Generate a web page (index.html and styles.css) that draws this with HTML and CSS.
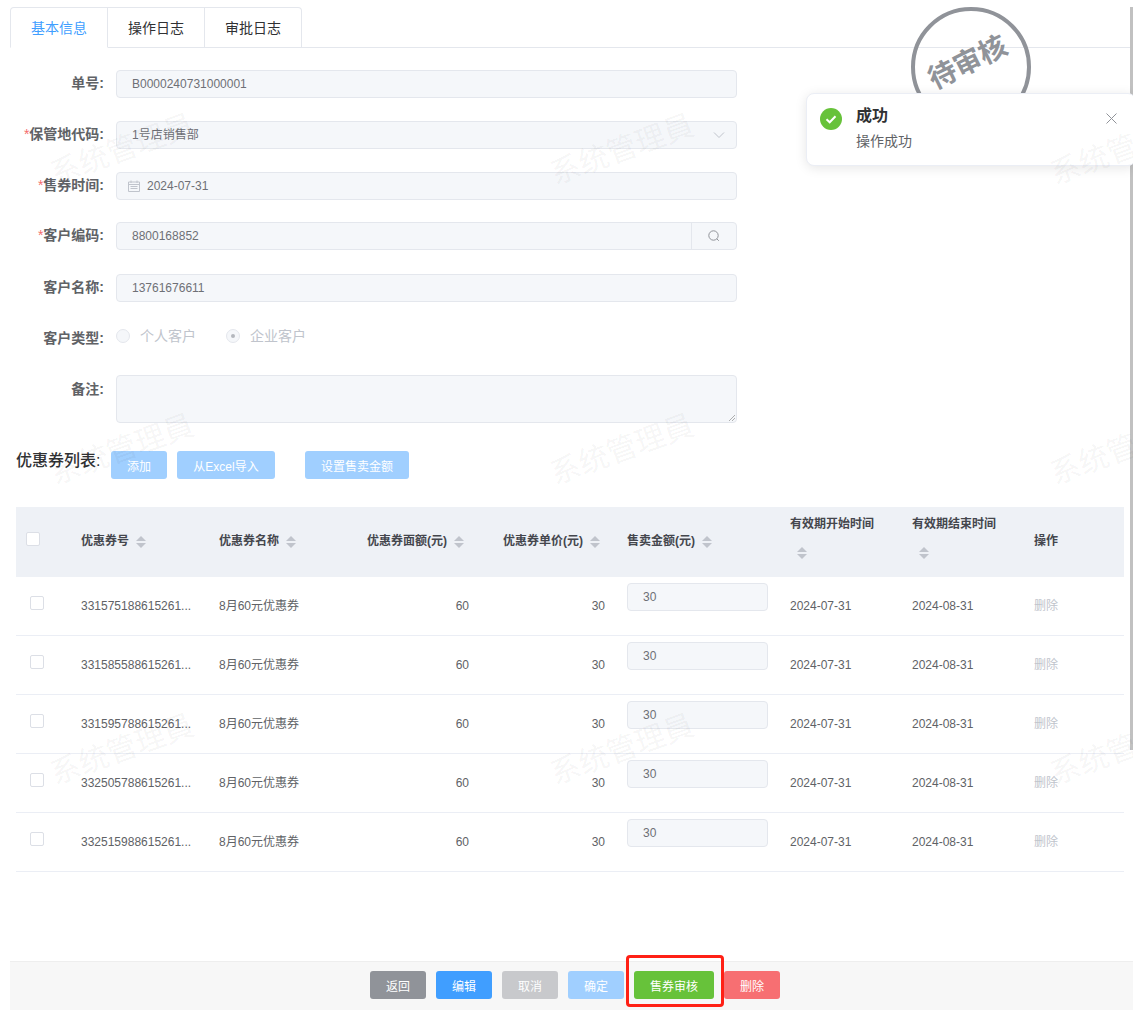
FILE: index.html
```html
<!DOCTYPE html>
<html lang="zh-CN">
<head>
<meta charset="utf-8">
<title>售券单</title>
<link rel="stylesheet" href="styles.css">
</head>
<body>
<div class="page">
  <main class="main">
    <div class="tabs">
      <div class="tab tab-active">基本信息</div>
      <div class="tab">操作日志</div>
      <div class="tab">审批日志</div>
    </div>
    <form class="form">
      <div class="row">
        <div class="label">单号:</div>
        <div class="input">B0000240731000001</div>
      </div>
      <div class="row">
        <div class="label"><span class="req">*</span>保管地代码:</div>
        <div class="input input-select">1号店销售部
          <svg class="arrow" width="12" height="8" viewBox="0 0 12 8"><path d="M1 1.500l5 5 5-5" fill="none" stroke="#c0c4cc" stroke-width="1"/></svg>
        </div>
      </div>
      <div class="row">
        <div class="label"><span class="req">*</span>售券时间:</div>
        <div class="input input-date">
          <svg width="12" height="12" viewBox="0 0 12 12"><path d="M.5 2h11v9.500H.5zM.5 4.500h11M3 .5v2.500M9 .5v2.500M2.500 6.500h7M2.500 8.500h7" fill="none" stroke="#c0c4cc" stroke-width="1"/></svg>
          2024-07-31
        </div>
      </div>
      <div class="row">
        <div class="label"><span class="req">*</span>客户编码:</div>
        <div class="input input-group">
          <span class="group-text">8800168852</span>
          <span class="append"><svg width="12" height="12" viewBox="0 0 12 12"><circle cx="5.500" cy="5.500" r="4.700" fill="none" stroke="#909399" stroke-width="1"/><path d="M8.800 8.800l2 2" stroke="#909399" stroke-width="1"/></svg></span>
        </div>
      </div>
      <div class="row">
        <div class="label">客户名称:</div>
        <div class="input">13761676611</div>
      </div>
      <div class="row row-radio">
        <div class="label label-radio">客户类型:</div>
        <div class="radios">
          <span class="radio"><i class="dot"></i>个人客户</span>
          <span class="radio"><i class="dot dot-on"></i>企业客户</span>
        </div>
      </div>
      <div class="row">
        <div class="label label-area">备注:</div>
        <div class="input textarea">
          <svg class="grip" width="6" height="6" viewBox="0 0 6 6"><path d="M0 6l6-6M3 6l3-3" stroke="#9a9a9a" stroke-width=".8"/></svg>
        </div>
      </div>
    </form>

    <div class="list-head">
      <div class="list-title">优惠券列表:</div>
      <button type="button" class="btn btn-light">添加</button>
      <button type="button" class="btn btn-light btn-excel">从Excel导入</button>
      <button type="button" class="btn btn-light btn-far">设置售卖金额</button>
    </div>

    <table class="table">
      <colgroup>
        <col class="c1"><col class="c2"><col class="c3"><col class="c4"><col class="c5"><col class="c6"><col class="c7"><col class="c8"><col class="c9">
      </colgroup>
      <thead>
        <tr>
          <th class="th-check"><span class="check"></span></th>
          <th>优惠券号<span class="sort"></span></th>
          <th>优惠券名称<span class="sort"></span></th>
          <th class="th-right">优惠券面额(元)<span class="sort"></span></th>
          <th class="th-right">优惠券单价(元)<span class="sort"></span></th>
          <th class="th-amount">售卖金额(元)<span class="sort"></span></th>
          <th>有效期开始时间<span class="sort"></span></th>
          <th>有效期结束时间<span class="sort"></span></th>
          <th>操作</th>
        </tr>
      </thead>
      <tbody>
        <tr>
          <td class="td-check"><span class="check"></span></td>
          <td>331575188615261...</td><td>8月60元优惠券</td><td class="right">60</td><td class="right">30</td>
          <td class="td-amount"><div class="input input-cell">30</div></td>
          <td>2024-07-31</td><td>2024-08-31</td><td class="op">删除</td>
        </tr>
        <tr>
          <td class="td-check"><span class="check"></span></td>
          <td>331585588615261...</td><td>8月60元优惠券</td><td class="right">60</td><td class="right">30</td>
          <td class="td-amount"><div class="input input-cell">30</div></td>
          <td>2024-07-31</td><td>2024-08-31</td><td class="op">删除</td>
        </tr>
        <tr>
          <td class="td-check"><span class="check"></span></td>
          <td>331595788615261...</td><td>8月60元优惠券</td><td class="right">60</td><td class="right">30</td>
          <td class="td-amount"><div class="input input-cell">30</div></td>
          <td>2024-07-31</td><td>2024-08-31</td><td class="op">删除</td>
        </tr>
        <tr>
          <td class="td-check"><span class="check"></span></td>
          <td>332505788615261...</td><td>8月60元优惠券</td><td class="right">60</td><td class="right">30</td>
          <td class="td-amount"><div class="input input-cell">30</div></td>
          <td>2024-07-31</td><td>2024-08-31</td><td class="op">删除</td>
        </tr>
        <tr>
          <td class="td-check"><span class="check"></span></td>
          <td>332515988615261...</td><td>8月60元优惠券</td><td class="right">60</td><td class="right">30</td>
          <td class="td-amount"><div class="input input-cell">30</div></td>
          <td>2024-07-31</td><td>2024-08-31</td><td class="op">删除</td>
        </tr>
      </tbody>
    </table>
  </main>

  <footer class="footer">
    <button type="button" class="btn btn-grey">返回</button>
    <button type="button" class="btn btn-blue">编辑</button>
    <button type="button" class="btn btn-muted">取消</button>
    <button type="button" class="btn btn-light">确定</button>
    <button type="button" class="btn btn-green">售券审核</button>
    <button type="button" class="btn btn-red">删除</button>
  </footer>

  <div class="scrollbar"></div>
  <div class="stamp"><span class="stamp-text">待审核</span></div>

  <div class="notice">
    <svg class="notice-icon" width="22" height="22" viewBox="0 0 22 22"><circle cx="11" cy="11" r="11" fill="#67c23a"/><path d="M6.500 11.300l3.200 3 5.800-6" fill="none" stroke="#fff" stroke-width="2"/></svg>
    <div class="notice-body">
      <div class="notice-title">成功</div>
      <div class="notice-text">操作成功</div>
    </div>
    <svg class="notice-close" width="11" height="11" viewBox="0 0 11 11"><path d="M.5.500l10 10M10.500.500l-10 10" stroke="#909399" stroke-width="1"/></svg>
  </div>

  <div class="marks">
    <span>系统管理員</span><span>系统管理員</span><span>系统管理員</span>
    <span>系统管理員</span><span>系统管理員</span><span>系统管理員</span>
    <span>系统管理員</span><span>系统管理員</span><span>系统管理員</span>
  </div>

  <div class="highlight"></div>
</div>
</body>
</html>
```
FILE: styles.css
```css
* { box-sizing: border-box; }
html, body { margin: 0; height: 100%; overflow: hidden; background: #fff; }
body {
  font-family: "Liberation Sans", "Noto Sans CJK SC", sans-serif;
  font-size: 12px;
  color: #606266;
}
.page {
  position: relative;
  width: 1133px;
  height: 1010px;
  overflow: hidden;
  display: flex;
  flex-direction: column;
}
.main { flex: 1; padding: 7px 0 0 10px; min-height: 0; }

/* tabs */
.tabs { display: flex; height: 41px; width: 1120px; border-bottom: 1px solid #e4e7ed; }
.tab {
  width: 97px;
  height: 41px;
  line-height: 41px;
  text-align: center;
  font-size: 14px;
  color: #303133;
  border: 1px solid #e4e7ed;
  border-left: 0;
}
.tab:last-child { border-radius: 0 4px 0 0; }
.tab-active {
  width: 98px;
  color: #409eff;
  border-left: 1px solid #e4e7ed;
  border-bottom-color: #fff;
  border-radius: 4px 0 0 0;
}

/* form */
.form {
  display: grid;
  grid-template-rows: 51px 51px 50px 52px 48px 53px 48px;
  padding-top: 22px;
}
.row { display: flex; align-items: flex-start; column-gap: 12px; }
.label {
  width: 94px;
  height: 28px;
  line-height: 26px;
  text-align: right;
  font-size: 14px;
  font-weight: 700;
  white-space: nowrap;
  color: #606266;
}
.req { color: #f56c6c; font-weight: 400; }
.label-radio { line-height: 32px; }
.label-area { height: 28px; line-height: 28px; }
.input {
  position: relative;
  width: 621px;
  height: 28px;
  line-height: 26px;
  padding-left: 15px;
  background: #f5f7fa;
  border: 1px solid #e4e7ed;
  border-radius: 4px;
  color: #6e7076;
}
.input-select { display: block; }
.arrow { position: absolute; right: 11px; top: 9px; }
.input-date { display: flex; align-items: center; padding-left: 11px; column-gap: 7px; }
.input-group { display: flex; padding-right: 0; }
.group-text { flex: 1; }
.append {
  width: 45px;
  display: flex;
  align-items: center;
  justify-content: center;
  border-left: 1px solid #e4e7ed;
}
.radios { display: flex; column-gap: 30px; height: 28px; align-items: center; }
.radio { display: flex; align-items: center; column-gap: 10px; font-size: 14px; line-height: 18px; color: #c0c4cc; }
.dot {
  display: flex;
  align-items: center;
  justify-content: center;
  width: 14px;
  height: 14px;
  background: #f5f7fa;
  border: 1px solid #e4e7ed;
  border-radius: 50%;
}
.dot-on::after {
  content: "";
  width: 4px;
  height: 4px;
  border-radius: 50%;
  background: #b4b7bd;
}
.textarea { height: 48px; }
.grip { position: absolute; right: 1px; bottom: 1px; }

/* list toolbar */
.list-head { display: flex; margin: 28px 0 0 6px; height: 28px; }
.list-title {
  width: 95px;
  font-size: 16px;
  font-weight: 500;
  line-height: 20px;
  color: #303133;
  white-space: nowrap;
}
.btn {
  height: 28px;
  padding: 0 16px;
  border: 0;
  border-radius: 3px;
  font-family: inherit;
  font-size: 12px;
  color: #fff;
  white-space: nowrap;
}
.list-head .btn + .btn { margin-left: 10px; }
.list-head .btn + .btn-far { margin-left: 30px; }
.btn-excel { width: 98px; padding: 0; }
.btn-light { background: #a0cfff; }
.btn-grey { background: #909399; }
.btn-blue { background: #409eff; }
.btn-muted { background: #c8c9cc; }
.btn-green { background: #67c23a; }
.btn-red { background: #f76f72; }

/* table */
.table {
  margin: 28px 0 0 6px;
  width: 1108px;
  table-layout: fixed;
  border-collapse: separate;
  border-spacing: 0;
}
.c1 { width: 55px; }
.c2 { width: 138px; }
.c3 { width: 134px; }
.c4 { width: 136px; }
.c5 { width: 136px; }
.c6 { width: 165px; }
.c7 { width: 122px; }
.c8 { width: 122px; }
.c9 { width: 100px; }
.table th {
  height: 70px;
  padding: 0 10px 1px;
  background: #eef1f6;
  text-align: left;
  font-size: 12px;
  line-height: 23px;
  font-weight: 700;
  color: #44464d;
}
.table td {
  height: 59px;
  padding: 0 10px;
  line-height: 16px;
  border-bottom: 1px solid #ebeef5;
  white-space: nowrap;
  color: #606266;
}
.table .th-right { text-align: right; padding-right: 8px; }
.table .right { text-align: right; }
.table .th-amount { padding-left: 12px; }
.table .td-amount { padding: 0 12px; }
.table .th-check { padding: 0 0 6px 10px; }
.table .td-check { padding: 0 0 6px 14px; }
.check {
  display: block;
  width: 14px;
  height: 14px;
  background: #fff;
  border: 1px solid #dcdfe6;
  border-radius: 2px;
}
.sort {
  display: inline-flex;
  flex-direction: column;
  align-items: center;
  justify-content: center;
  row-gap: 2px;
  width: 24px;
  height: 34px;
  vertical-align: middle;
}
.sort::before, .sort::after {
  content: "";
  width: 0;
  height: 0;
  border-left: 5px solid transparent;
  border-right: 5px solid transparent;
}
.sort::before { border-bottom: 5px solid #c0c4cc; }
.sort::after { border-top: 5px solid #c0c4cc; }
.input-cell { width: 141px; margin-bottom: 18px; }
.table .op { color: #c0c4cc; }

/* footer */
.footer {
  flex: none;
  height: 49px;
  margin-left: 10px;
  padding: 0 0 2px 7px;
  display: flex;
  justify-content: center;
  align-items: center;
  column-gap: 10px;
  background: #f7f7f7;
  border-top: 1px solid #eeeeee;
}

/* overlays */
.scrollbar {
  position: absolute;
  right: 0;
  top: 7px;
  width: 3px;
  height: 743px;
  background: #c1c1c1;
}
.stamp {
  position: absolute;
  left: 911px;
  top: 7px;
  width: 120px;
  height: 120px;
  border: 4px solid #909399;
  border-radius: 50%;
  display: flex;
  align-items: center;
  justify-content: center;
}
.stamp-text {
  transform: rotate(-26.5deg);
  font-size: 28px;
  line-height: 34px;
  font-weight: 700;
  color: #909399;
  margin: 0 6px 9px 0;
}
.notice {
  position: absolute;
  left: 806px;
  top: 93px;
  width: 330px;
  height: 73px;
  display: flex;
  background: #fff;
  border: 1px solid #ebeef5;
  border-radius: 8px;
  box-shadow: 0 2px 12px rgba(0, 0, 0, .1);
  padding: 14px 0 0 13px;
}
.notice-icon { flex: none; }
.notice-body { margin-left: 14px; }
.notice-title { font-size: 16px; font-weight: 700; line-height: 16px; color: #303133; }
.notice-text { margin-top: 7px; font-size: 14px; line-height: 20px; color: #606266; }
.notice-close { position: absolute; left: 299px; top: 19px; }
.marks {
  position: absolute;
  left: -129px;
  top: -3px;
  display: grid;
  grid-template-columns: repeat(3, 500px);
  grid-auto-rows: 300px;
  place-items: center;
  pointer-events: none;
}
.marks span {
  transform: rotate(-20deg);
  font-size: 30px;
  color: rgba(0, 0, 0, .05);
  white-space: nowrap;
}
.highlight {
  position: absolute;
  left: 626px;
  top: 955px;
  width: 98px;
  height: 52px;
  border: 3px solid #ff2015;
  border-radius: 4px;
}
```
